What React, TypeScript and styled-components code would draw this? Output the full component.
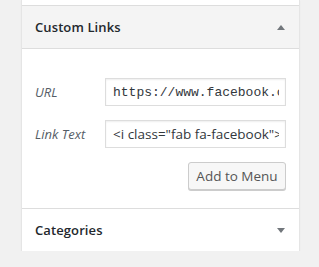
import React from "react";
import styled, { createGlobalStyle } from "styled-components";

const Global = createGlobalStyle`
  html, body { margin: 0; padding: 0; background: #f1f1f1; }
  body { font-family: "Open Sans", "Noto Sans", sans-serif; color: #23282d; }
`;

const Page = styled.div`
  padding-left: 21px;
  width: 279px;
`;

const Panel = styled.div`
  background: #fff;
  border-left: 1px solid #e5e5e5;
  border-right: 1px solid #e5e5e5;
  box-shadow: 0 1px 1px rgba(0, 0, 0, 0.06);
`;

const PrevStub = styled.div`
  height: 5px;
  border-bottom: 1px solid #dddddd;
`;

const SectionHeader = styled.div<{ $open?: boolean }>`
  height: 42px;
  display: flex;
  align-items: center;
  justify-content: space-between;
  padding: 0 14px 0 13px;
  background: ${(p) => (p.$open ? "#f4f4f4" : "#fff")};
  border-bottom: ${(p) => (p.$open ? "1px solid #dddddd" : "none")};
`;

const Title = styled.h3`
  margin: 0;
  font-size: 13px;
  font-weight: 600;
  color: #23282d;
  letter-spacing: 0.1px;
`;

const Arrow = styled.span<{ $up?: boolean }>`
  width: 0;
  height: 0;
  border-left: 4px solid transparent;
  border-right: 4px solid transparent;
  ${(p) =>
    p.$up
      ? "border-bottom: 5px solid #72777c;"
      : "border-top: 5px solid #72777c;"}
`;

const Content = styled.div`
  padding: 29px 13px 18px 13px;
  border-bottom: 1px solid #dddddd;
  display: flex;
  flex-direction: column;
  gap: 14px;
`;

const Row = styled.label`
  display: flex;
  align-items: center;
  justify-content: space-between;
`;

const Label = styled.span`
  font-style: italic;
  font-size: 13px;
  color: #555d66;
`;

const Input = styled.input<{ $mono?: boolean }>`
  box-sizing: border-box;
  width: 181px;
  height: 28px;
  border: 1px solid #dddddd;
  box-shadow: inset 0 1px 2px rgba(0, 0, 0, 0.07);
  padding: 0 6px 0 7px;
  font-size: ${(p) => (p.$mono ? "13px" : "13.5px")};
  font-family: ${(p) =>
    p.$mono ? '"Liberation Mono", monospace' : '"Open Sans", sans-serif'};
  color: #32373c;
  background: #fff;
  outline: none;
`;

const Actions = styled.div`
  display: flex;
  justify-content: flex-end;
`;

const Button = styled.button`
  box-sizing: border-box;
  width: 98px;
  height: 28px;
  padding: 0;
  font-family: "Open Sans", sans-serif;
  font-size: 13.5px;
  color: #555;
  background: #f7f7f7;
  border: 1px solid #cccccc;
  border-radius: 3px;
  box-shadow: 0 1px 0 #cccccc;
`;

export default function App() {
  return (
    <>
      <Global />
      <Page>
        <Panel>
          <PrevStub />
          <SectionHeader $open>
            <Title>Custom Links</Title>
            <Arrow $up />
          </SectionHeader>
          <Content>
            <Row>
              <Label>URL</Label>
              <Input $mono defaultValue="https://www.facebook.com/" />
            </Row>
            <Row>
              <Label>Link Text</Label>
              <Input defaultValue={'<i class="fab fa-facebook"></i>'} />
            </Row>
            <Actions>
              <Button>Add to Menu</Button>
            </Actions>
          </Content>
          <SectionHeader>
            <Title>Categories</Title>
            <Arrow />
          </SectionHeader>
        </Panel>
      </Page>
    </>
  );
}
